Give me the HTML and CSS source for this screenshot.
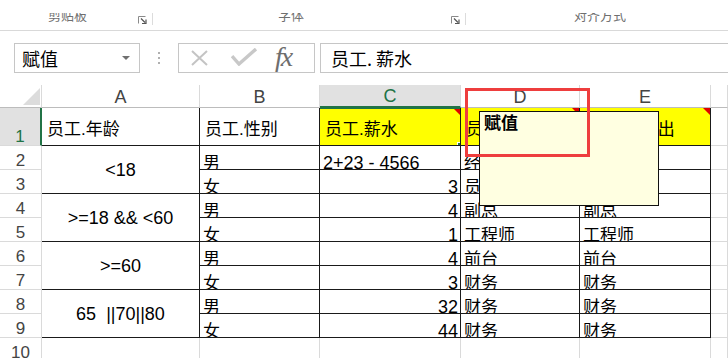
FILE: index.html
```html
<!DOCTYPE html>
<html lang="zh-CN">
<head>
  <meta charset="UTF-8">
  <title>赋值</title>
  <link rel="stylesheet" href="styles.css">
</head>
<body>
  <!-- Ribbon (unterer Rand) -->
  <div class="ribbon">
    <div class="group group-1">
      <span class="group-label"><span>剪贴板</span></span>
      <svg class="launcher" width="9" height="8" viewBox="0 0 9 8"><path d="M0.5 7.5V0.5H7.5" fill="none" stroke="#8a8a8a"/><path d="M3 2.5L7 6.5M8 3.5V7.5H4" fill="none" stroke="#555" stroke-width="1.2"/></svg>
    </div>
    <div class="group group-2">
      <span class="group-label"><span>字体</span></span>
      <svg class="launcher" width="9" height="8" viewBox="0 0 9 8"><path d="M0.5 7.5V0.5H7.5" fill="none" stroke="#8a8a8a"/><path d="M3 2.5L7 6.5M8 3.5V7.5H4" fill="none" stroke="#555" stroke-width="1.2"/></svg>
    </div>
    <div class="group group-3">
      <span class="group-label"><span>对齐方式</span></span>
    </div>
  </div>

  <!-- Bearbeitungsleiste -->
  <div class="formula-bar">
    <div class="name-box">
      <span>赋值</span>
      <span class="drop"></span>
    </div>
    <div class="grip"><i></i><i></i><i></i></div>
    <div class="fx-box">
      <svg class="icon-x" width="24" height="16" viewBox="0 0 24 16"><path d="M4 1L19 15M19 1L4 15" stroke="#c4c4c4" stroke-width="2"/></svg>
      <svg class="icon-ok" width="26" height="18" viewBox="0 0 26 18"><path d="M1 8L8 16L25 1" fill="none" stroke="#c8c8c8" stroke-width="3.4"/></svg>
      <span class="fx">fx</span>
    </div>
    <div class="formula-input">员工. 薪水</div>
  </div>

  <!-- Tabelle -->
  <div class="sheet">
    <table class="grid">
      <colgroup>
        <col class="w-hd"><col class="w-a"><col class="w-b"><col class="w-c"><col class="w-d"><col class="w-e"><col class="w-f">
      </colgroup>
      <tr class="head-row">
        <th class="corner"><span class="corner-tri"></span></th>
        <th>A</th><th>B</th><th class="sel">C</th><th>D</th><th>E</th><th></th>
      </tr>
      <tr class="row-1">
        <th class="row-hd sel">1</th>
        <td class="b">员工.年龄</td>
        <td class="b">员工.性别</td>
        <td class="b hl active">员工.薪水<span class="mark"></span><span class="sel-box"></span><span class="handle"></span></td>
        <td class="b hl">员工.职位<span class="mark"></span></td>
        <td class="b hl">员工.职位出<span class="mark"></span></td>
        <td></td>
      </tr>
      <tr>
        <th class="row-hd">2</th>
        <td class="b merged" rowspan="2">&lt;18</td>
        <td class="b">男</td>
        <td class="b num-l">2+23 - 4566</td>
        <td class="b">经理</td><td class="b">经理</td><td></td>
      </tr>
      <tr>
        <th class="row-hd">3</th>
        <td class="b">女</td><td class="b num">3</td><td class="b">员工</td><td class="b">员工</td><td></td>
      </tr>
      <tr>
        <th class="row-hd">4</th>
        <td class="b merged" rowspan="2">&gt;=18 &amp;&amp; &lt;60</td>
        <td class="b">男</td><td class="b num">4</td><td class="b">副总</td><td class="b">副总</td><td></td>
      </tr>
      <tr>
        <th class="row-hd">5</th>
        <td class="b">女</td><td class="b num">1</td><td class="b">工程师</td><td class="b">工程师</td><td></td>
      </tr>
      <tr>
        <th class="row-hd">6</th>
        <td class="b merged" rowspan="2">&gt;=60</td>
        <td class="b">男</td><td class="b num">4</td><td class="b">前台</td><td class="b">前台</td><td></td>
      </tr>
      <tr>
        <th class="row-hd">7</th>
        <td class="b">女</td><td class="b num">3</td><td class="b">财务</td><td class="b">财务</td><td></td>
      </tr>
      <tr>
        <th class="row-hd">8</th>
        <td class="b merged" rowspan="2">65&nbsp; ||70||80</td>
        <td class="b">男</td><td class="b num">32</td><td class="b">财务</td><td class="b">财务</td><td></td>
      </tr>
      <tr>
        <th class="row-hd">9</th>
        <td class="b">女</td><td class="b num">44</td><td class="b">财务</td><td class="b">财务</td><td></td>
      </tr>
      <tr>
        <th class="row-hd">10</th>
        <td></td><td></td><td></td><td></td><td></td><td></td>
      </tr>
    </table>

    <!-- Kommentar -->
    <div class="comment">赋值</div>
    <div class="red-frame"></div>
  </div>
</body>
</html>
```

FILE: styles.css
```css
body {
  margin: 0;
  background-color: white;
  color: black;
  font-family: "Liberation Sans", "Noto Sans CJK SC", sans-serif;
  overflow: hidden;
}

/* Ribbon */
.ribbon {
  height: 30px;
  border-bottom: 1px solid #d9d9d9;
  display: flex;
  align-items: flex-start;
}

.group {
  display: flex;
  align-items: flex-start;
  margin-top: 13px;
  height: 12px;
}

.group-1 {
  width: 152px;
  border-right: 1px solid #dcdcdc;
}

.group-2 {
  width: 312px;
  border-right: 1px solid #dcdcdc;
}

.group-3 {
  flex: 1;
}

/* Beschriftung oben abgeschnitten wie im Screenshot */
.group-label {
  display: flex;
  align-items: flex-end;
  height: 9px;
  overflow: hidden;
  font-family: "Noto Sans CJK SC", sans-serif;
  font-size: 13px;
  color: #6f6f6f;
}

.group-label span {
  line-height: 15px;
  white-space: nowrap;
}

.group-1 .group-label { margin-left: 48px; }
.group-2 .group-label { margin-left: 125px; }
.group-3 .group-label { margin-left: 108px; }

.launcher {
  margin-left: auto;
  margin-right: 5px;
  margin-top: 3px;
}

/* Bearbeitungsleiste */
.formula-bar {
  display: flex;
  margin-top: 12px;
  padding-left: 14px;
  height: 30px;
}

.name-box {
  border: 1px solid #c6c6c6;
  display: flex;
  align-items: center;
  padding-left: 7px;
  box-sizing: border-box;
  width: 126px;
  font-family: "Noto Sans CJK SC", sans-serif;
  font-size: 18px;
}

.drop {
  margin-left: auto;
  margin-right: 9px;
  border-left: 4px solid transparent;
  border-right: 4px solid transparent;
  border-top: 4px solid #707070;
}

.grip {
  width: 38px;
  display: flex;
  flex-direction: column;
  align-items: center;
  justify-content: center;
  gap: 3px;
}

.grip i {
  display: block;
  width: 2px;
  height: 2px;
  background-color: #b0b0b0;
}

.fx-box {
  width: 137px;
  box-sizing: border-box;
  border: 1px solid #c6c6c6;
  display: flex;
  align-items: center;
  padding-left: 9px;
}

.icon-x {
  margin-right: 19px;
}

.icon-ok {
  margin-right: 18px;
  margin-top: -2px;
}

.fx {
  font-family: "Liberation Serif", serif;
  font-style: italic;
  font-size: 28px;
  color: #6e6e6e;
  letter-spacing: -2px;
  margin-top: -3px;
}

.formula-input {
  flex: 1;
  margin-left: 5px;
  border: 1px solid #c6c6c6;
  border-right: none;
  display: flex;
  align-items: center;
  padding-left: 10px;
  font-size: 18px;
  font-family: "Noto Sans CJK SC", sans-serif;
}

/* Tabelle */
.sheet {
  position: relative;
  margin-top: 12px;
}

.grid {
  width: 728px;
  table-layout: fixed;
  border-collapse: separate;
  border-spacing: 0;
}

.w-hd { width: 42px; }
.w-a { width: 158px; }
.w-b { width: 120px; }
.w-c { width: 141px; }
.w-d { width: 119px; }
.w-e { width: 131px; }
.w-f { width: 17px; }

.grid th,
.grid td {
  padding: 0 3px;
  white-space: nowrap;
  overflow: hidden;
  border-right: 1px solid #dadada;
  border-bottom: 1px solid #dadada;
}

.grid tr {
  height: 24px;
}

.grid td {
  font-size: 17px;
  line-height: 11px;
  vertical-align: bottom;
  text-align: left;
}

.grid .head-row {
  height: 23px;
}

.head-row th {
  font-weight: normal;
  font-size: 18px;
  color: #444;
  text-align: center;
  vertical-align: bottom;
  line-height: 20px;
  border-bottom-color: #bcbcbc;
}

.head-row th.sel {
  background-color: #e1e1e1;
  color: #217346;
  border-bottom: 2px solid #217346;
}

.corner {
  position: relative;
}

.corner-tri {
  position: absolute;
  right: 1px;
  bottom: 2px;
  border-left: 17px solid transparent;
  border-bottom: 17px solid #dcdcdc;
}

.row-hd {
  font-weight: normal;
  font-size: 17px;
  color: #444;
  text-align: center;
  vertical-align: bottom;
  line-height: 17px;
  border-right-color: #bcbcbc;
}

.row-hd.sel {
  background-color: #e1e1e1;
  color: #217346;
  border-right: 2px solid #217346;
}

.grid .row-1 {
  height: 38px;
}

.grid .row-1 td {
  vertical-align: middle;
  line-height: 20px;
  padding: 6px 3px 0 5px;
}

.grid td.b {
  border-right-color: #1a1a1a;
  border-bottom-color: #1a1a1a;
}

.grid td.hl {
  background-color: #ffff00;
}

.grid td.merged {
  text-align: center;
  vertical-align: middle;
  font-size: 18px;
  line-height: 20px;
}

.grid td.num {
  text-align: right;
  font-size: 18px;
  padding-right: 2px;
}

.grid td.num-l {
  font-size: 18px;
}

.active,
.row-1 td {
  position: relative;
}

.mark {
  position: absolute;
  top: 0;
  right: 0;
  border-left: 7px solid transparent;
  border-top: 7px solid #e00000;
}

.sel-box {
  position: absolute;
  top: -1px;
  left: -2px;
  right: -2px;
  bottom: -2px;
  border: 2px solid #217346;
}

.handle {
  position: absolute;
  right: -4px;
  bottom: -4px;
  width: 5px;
  height: 5px;
  background-color: #217346;
  border: 1px solid white;
}

.comment {
  position: absolute;
  left: 479px;
  top: 26px;
  width: 180px;
  height: 95px;
  box-sizing: border-box;
  background-color: #ffffe1;
  border: 1px solid #111;
  padding: 0 4px;
  font-family: "Noto Sans CJK SC", sans-serif;
  font-weight: bold;
  font-size: 17px;
  line-height: 20px;
}

.red-frame {
  position: absolute;
  left: 465px;
  top: 3px;
  width: 125px;
  height: 69px;
  box-sizing: border-box;
  border: 3px solid #ee3e3e;
}
```
